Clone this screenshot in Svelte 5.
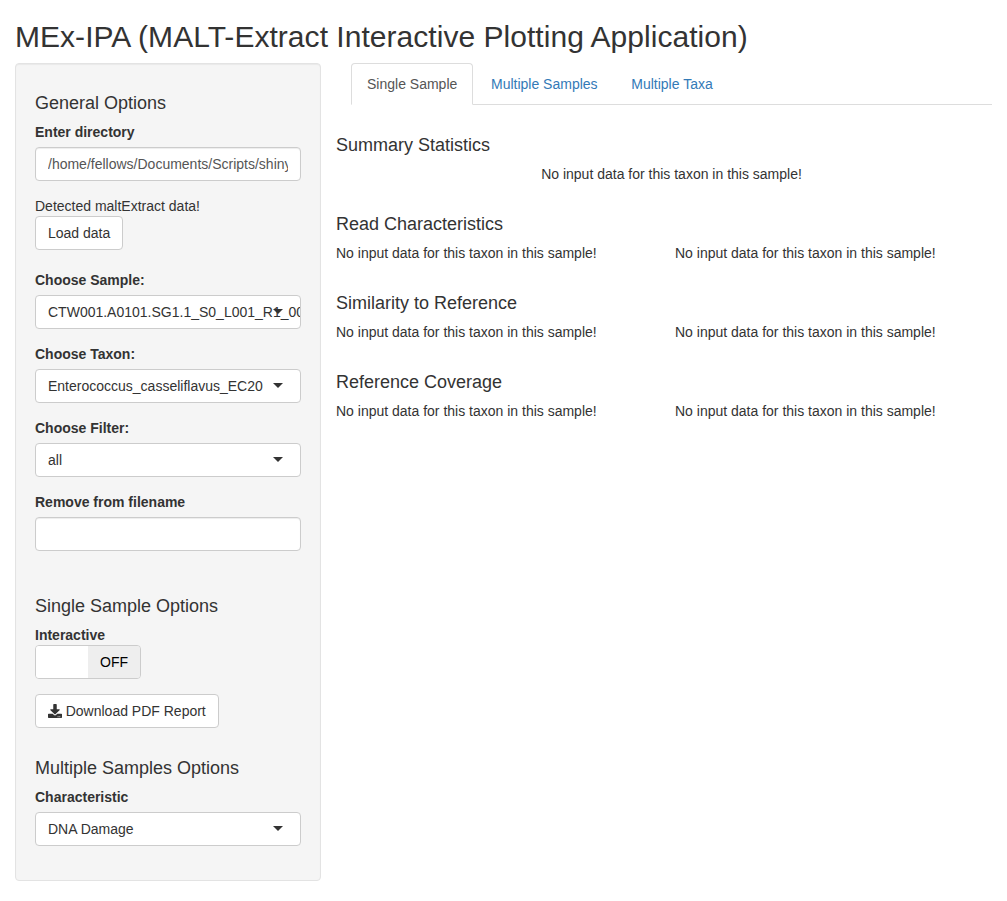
<script>
  let directory = $state('/home/fellows/Documents/Scripts/shiny_apps/MEx-IPA');
  let remove = $state('');
  let active = $state(0);

  const tabs = ['Single Sample', 'Multiple Samples', 'Multiple Taxa'];
  const selects = [
    { label: 'Choose Sample:', value: 'CTW001.A0101.SG1.1_S0_L001_R1_001' },
    { label: 'Choose Taxon:', value: 'Enterococcus_casseliflavus_EC20' },
    { label: 'Choose Filter:', value: 'all' }
  ];
  const empty = 'No input data for this taxon in this sample!';
  const sections = ['Read Characteristics', 'Similarity to Reference', 'Reference Coverage'];
</script>

{#snippet picker(label, value)}
  <div class="group">
    <span class="label">{label}</span>
    <div class="control select">
      <span>{value}</span>
      <i class="caret"></i>
    </div>
  </div>
{/snippet}

<div class="page">
  <h2>MEx-IPA (MALT-Extract Interactive Plotting Application)</h2>
  <div class="layout">
    <aside class="well">
      <h4>General Options</h4>
      <div class="group">
        <label class="label" for="dir">Enter directory</label>
        <input id="dir" class="control" type="text" bind:value={directory} />
      </div>
      <div class="status">Detected maltExtract data!</div>
      <button class="btn load">Load data</button>

      {#each selects as s}
        {@render picker(s.label, s.value)}
      {/each}
      <div class="group last">
        <label class="label" for="remove">Remove from filename</label>
        <input id="remove" class="control" type="text" bind:value={remove} />
      </div>

      <h4>Single Sample Options</h4>
      <div class="switch-label">Interactive</div>
      <div class="switch"><span class="handle"></span><span class="off">OFF</span></div>
      <button class="btn download">
        <svg viewBox="0 0 512 512" width="14" height="14" aria-hidden="true">
          <path fill="currentColor" d="M216 0h80c13.3 0 24 10.7 24 24v168h87.7c17.8 0 26.7 21.5 14.1 34.1L269.7 378.3c-7.5 7.5-19.8 7.5-27.3 0L90.1 226.1c-12.6-12.6-3.7-34.1 14.1-34.1H192V24c0-13.3 10.7-24 24-24zm296 376v112c0 13.3-10.7 24-24 24H24c-13.3 0-24-10.7-24-24V376c0-13.3 10.7-24 24-24h146.7l49 49c20.1 20.1 52.5 20.1 72.6 0l49-49H488c13.3 0 24 10.7 24 24zm-124 88c0-11-9-20-20-20s-20 9-20 20 9 20 20 20 20-9 20-20zm64 0c0-11-9-20-20-20s-20 9-20 20 9 20 20 20 20-9 20-20z" />
        </svg>
        <span>Download PDF Report</span>
      </button>

      <h4>Multiple Samples Options</h4>
      {@render picker('Characteristic', 'DNA Damage')}
    </aside>

    <main>
      <nav>
        {#each tabs as tab, i}
          <button class="tab" class:active={active === i} onclick={() => (active = i)}>{tab}</button>
        {/each}
      </nav>
      <section>
        <h4>Summary Statistics</h4>
        <div class="center">{empty}</div>
      </section>
      {#each sections as title}
        <section>
          <h4>{title}</h4>
          <div class="split"><div>{empty}</div><div>{empty}</div></div>
        </section>
      {/each}
    </main>
  </div>
</div>

<style>
  :global(body) {
    background: #fff;
  }
  .page {
    box-sizing: border-box;
    display: flow-root;
    min-height: 901px;
    padding-left: 15px;
    font: 14px/20px "Liberation Sans", Arial, sans-serif;
    color: #333;
  }
  .page * {
    box-sizing: border-box;
  }
  h2 {
    margin: 20px 0 10px;
    font-size: 30px;
    font-weight: 500;
    line-height: 33px;
    letter-spacing: 0.035px;
  }
  h4 {
    margin: 10px 0 8px;
    font-size: 18px;
    font-weight: 500;
    line-height: 21px;
  }
  .layout {
    display: flex;
    align-items: flex-start;
  }
  .well {
    display: flow-root;
    flex: none;
    width: 306px;
    padding: 19px;
    background: #f5f5f5;
    border: 1px solid #e3e3e3;
    border-radius: 4px;
    box-shadow: inset 0 1px 1px rgba(0, 0, 0, 0.05);
  }
  .group {
    margin-bottom: 15px;
  }
  .label {
    display: block;
    margin-bottom: 5px;
    font-weight: 700;
  }
  .control {
    display: block;
    width: 100%;
    height: 34px;
    padding: 6px 12px;
    font: inherit;
    color: #555;
    background: #fff;
    border: 1px solid #ccc;
    border-radius: 4px;
    box-shadow: inset 0 1px 1px rgba(0, 0, 0, 0.075);
    outline: none;
  }
  .select {
    position: relative;
    overflow: hidden;
    white-space: nowrap;
    color: #333;
    box-shadow: none;
  }
  .caret {
    position: absolute;
    top: 50%;
    right: 17px;
    margin-top: -3px;
    border: 5px solid transparent;
    border-top-color: #333;
    border-bottom: 0;
  }
  .btn {
    display: flex;
    align-items: center;
    height: 34px;
    padding: 6px 12px;
    font: inherit;
    color: #333;
    background: #fff;
    border: 1px solid #ccc;
    border-radius: 4px;
  }
  .load {
    margin-bottom: 20px;
  }
  .last {
    margin-bottom: 45px;
  }
  .download {
    gap: 3.7px;
    margin: 15px 0 30px;
  }
  .switch-label {
    font-weight: 700;
  }
  .switch {
    display: flex;
    width: 106px;
    height: 34px;
    overflow: hidden;
    border: 1px solid #ccc;
    border-radius: 4px;
  }
  .handle {
    flex: 1;
    background: #fff;
  }
  .off {
    flex: 1;
    padding: 6px 0;
    text-align: center;
    color: #000;
    background: #eee;
  }
  main {
    flex: 1;
    min-width: 0;
    padding-left: 15px;
  }
  nav {
    display: flex;
    gap: 1.7px;
    height: 42px;
    margin: 0 15px 30px;
    border-bottom: 1px solid #ddd;
  }
  .tab {
    height: 42px;
    padding: 10px 15px;
    font: inherit;
    color: #337ab7;
    background: none;
    border: 1px solid transparent;
    border-radius: 4px 4px 0 0;
  }
  .tab.active {
    color: #555;
    background: #fff;
    border-color: #ddd;
    border-bottom-color: transparent;
  }
  section {
    margin-bottom: 30px;
  }
  .center {
    text-align: center;
  }
  .split {
    display: grid;
    grid-template-columns: 1fr 1fr;
    column-gap: 3.5px;
    margin-right: -3.5px;
    overflow: hidden;
    white-space: nowrap;
  }
</style>
